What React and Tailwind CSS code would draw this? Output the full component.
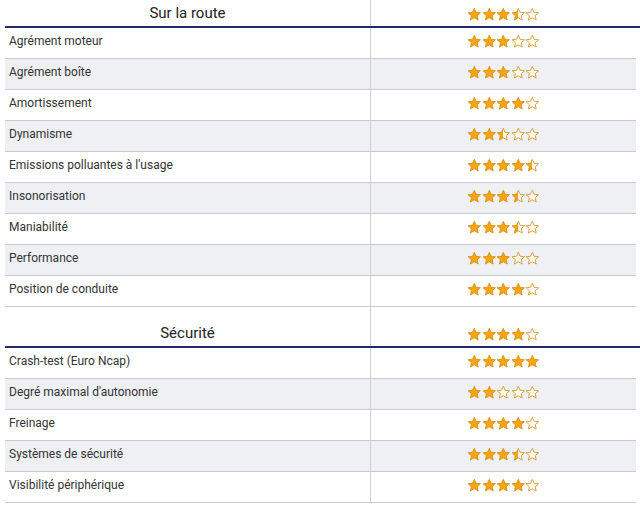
import React, { useId } from 'react';

const STAR = 'M12 1.8l3 6.6 7.2.7-5.4 4.9 1.6 7.1L12 17.4l-6.4 3.7 1.6-7.1L1.8 9.1 9 8.4z';

function Star({ fill }) {
  const id = useId();
  // fill: 1 plein, 0.5 demi, 0 vide
  const off = fill === 1 ? '1' : fill === 0.5 ? '0.5' : '0';
  return (
    <svg width="14.6" height="15" viewBox="0 0 24 24" className="block">
      <defs>
        <linearGradient id={id} x1="0" x2="1" y1="0" y2="0">
          <stop offset={off} stopColor="#f6a412" />
          <stop offset={off} stopColor="#ffffff" />
        </linearGradient>
      </defs>
      <path d={STAR} fill={`url(#${id})`} stroke="#d98a0b" strokeWidth="1.3" strokeLinejoin="round" />
    </svg>
  );
}

function Stars({ value }) {
  return (
    <div className="flex">
      {[1, 2, 3, 4, 5].map((i) => (
        <Star key={i} fill={value >= i ? 1 : value >= i - 0.5 ? 0.5 : 0} />
      ))}
    </div>
  );
}

const sections = [
  {
    title: 'Sur la route',
    note: 3.5,
    first: true,
    rows: [
      ['Agrément moteur', 3],
      ['Agrément boîte', 3],
      ['Amortissement', 4],
      ['Dynamisme', 2.5],
      ["Emissions polluantes à l'usage", 4.5],
      ['Insonorisation', 3.5],
      ['Maniabilité', 3.5],
      ['Performance', 3],
      ['Position de conduite', 4],
    ],
  },
  {
    title: 'Sécurité',
    note: 4,
    rows: [
      ['Crash-test (Euro Ncap)', 5],
      ["Degré maximal d'autonomie", 2],
      ['Freinage', 4],
      ['Systèmes de sécurité', 3.5],
      ['Visibilité périphérique', 4],
    ],
  },
];

export default function App() {
  return (
    <div className="min-h-[508px] bg-white pl-[5px] text-[#333] font-['Roboto','Liberation_Sans',sans-serif] overflow-hidden">
      {sections.map((s) => (
        <div key={s.title}>
          {/* entête de section */}
          <div
            className={`flex border-b-2 border-[#1d2a6b] ${s.first ? 'h-[28px]' : 'h-[41px]'}`}
          >
            <div className="w-[366px] flex items-end justify-center pb-[5px] text-[15px] leading-[16px] text-[#222] border-r border-[#cfcfcf]">
              {s.title}
            </div>
            <div className="w-[265px] flex items-end justify-center pb-[4px]">
              <Stars value={s.note} />
            </div>
          </div>
          {s.rows.map(([label, v], i) => (
            <div
              key={label}
              className={`flex h-[31px] w-[631px] border-b border-[#c8cacd] ${i % 2 === 1 ? 'bg-[#eef0f4]' : 'bg-white'}`}
            >
              <div className="w-[366px] flex items-center pl-[4px] pb-[4px] text-[12px] border-r border-[#cfcfcf]">
                {label}
              </div>
              <div className="w-[265px] flex items-center justify-center pb-[3px]">
                <Stars value={v} />
              </div>
            </div>
          ))}
        </div>
      ))}
    </div>
  );
}
